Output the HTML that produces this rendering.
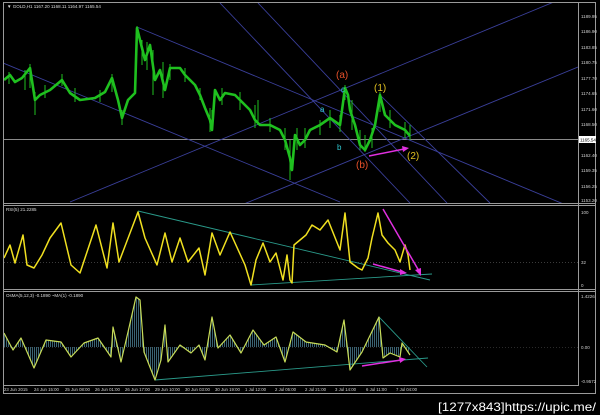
<!DOCTYPE html>
<html><head><meta charset="utf-8"><style>
html,body{margin:0;padding:0;background:#000;width:600px;height:415px;overflow:hidden}
svg{display:block}
text{font-family:"Liberation Sans",sans-serif}
</style></head><body>
<svg width="600" height="415" viewBox="0 0 600 415" xmlns="http://www.w3.org/2000/svg">
<defs>
<clipPath id="m"><rect x="4" y="3" width="574" height="200"/></clipPath>
<clipPath id="r"><rect x="4" y="206" width="574" height="82"/></clipPath>
<clipPath id="o"><rect x="4" y="291" width="574" height="93"/></clipPath>
<pattern id="hs" width="2" height="4" patternUnits="userSpaceOnUse"><rect width="1" height="4" fill="#3a6272"/></pattern>
</defs>
<rect width="600" height="415" fill="#000"/>
<g stroke="#9a9a9a" fill="none" stroke-width="1">
<rect x="3.5" y="2.5" width="592" height="391"/>
<line x1="3" y1="203.5" x2="596" y2="203.5"/>
<line x1="3" y1="205.5" x2="596" y2="205.5"/>
<line x1="3" y1="289.5" x2="596" y2="289.5"/>
<line x1="3" y1="291.5" x2="596" y2="291.5"/>
<line x1="578.5" y1="3" x2="578.5" y2="385"/>
<line x1="3" y1="385.5" x2="579" y2="385.5"/>
</g>
<g clip-path="url(#m)">
<line x1="4" y1="139.5" x2="578" y2="139.5" stroke="#8a8a8a"/>
<g stroke="#3a3f9a" stroke-width="0.9" fill="none">
<line x1="137" y1="27" x2="578" y2="210"/>
<line x1="3" y1="63" x2="340" y2="202"/>
<line x1="70" y1="202" x2="578" y2="-8"/>
<line x1="200" y1="222" x2="578" y2="67"/>
<line x1="220" y1="3" x2="410" y2="203"/>
<line x1="258" y1="3" x2="447" y2="203"/>
<line x1="380" y1="95" x2="490" y2="203"/>
</g>
<polyline fill="none" stroke="#1fc01f" stroke-width="2.6" stroke-linejoin="round" points="4,80 10,75 15,82 22,78 30,68 35,100 40,95 50,90 62,80 70,93 80,100 95,98 105,92 112,78 118,100 122,118 128,100 135,93 137,28 140,40 145,60 150,45 155,80 160,70 165,90 170,68 180,68 185,75 195,85 200,95 205,108 210,120 212,130 215,90 220,100 225,93 235,95 245,105 250,110 255,120 260,125 270,125 280,130 285,140 290,158 292,170 295,135 300,145 305,140 310,130 320,125 330,118 340,125 345,88 348,95 350,110 355,125 360,145 365,150 370,140 375,125 380,95 385,115 395,125 405,130 410,136"/>
<path fill="none" stroke="#1fc01f" stroke-width="1" d="M9,72V84M25,70V90M30,64V88M35,92V115M45,85V98M62,74V86M75,88V102M100,90V102M112,74V92M122,110V125M137,26V55M142,40V65M147,42V70M153,50V95M163,62V98M170,64V80M185,68V82M200,88V100M210,108V132M212,110V130M222,88V105M240,92V110M255,105V128M258,100V125M270,118V132M285,128V150M290,140V180M297,128V150M305,128V148M320,120V135M330,110V128M340,115V132M345,85V100M352,100V130M360,130V150M365,135V152M372,128V148M380,92V112M390,110V128M405,122V138M410,125V140"/>
</g>
<g font-size="4.5" fill="#cfcfcf">
<text x="581" y="18">1189.95</text><text x="581" y="33">1186.90</text><text x="581" y="49">1183.85</text>
<text x="581" y="64">1180.75</text><text x="581" y="80">1177.70</text><text x="581" y="95">1174.65</text>
<text x="581" y="111">1171.60</text><text x="581" y="126">1168.50</text>
<text x="581" y="157">1162.40</text><text x="581" y="172">1159.35</text><text x="581" y="188">1156.25</text><text x="581" y="202">1153.20</text>
<text x="581" y="214">100</text><text x="581" y="264">32</text><text x="581" y="287">0</text>
<text x="581" y="298">1.4226</text><text x="581" y="349">0.00</text><text x="581" y="383">-0.9572</text>
</g>
<rect x="579" y="136" width="17" height="7" fill="#fff"/>
<text x="580" y="141.5" font-size="4.5" fill="#000">1165.54</text>
<text x="7" y="8" font-size="4.5" fill="#ddd">▼ GOLD,H1  1167.20 1168.11 1164.97 1165.54</text>
<g font-size="10">
<text x="336" y="78" fill="#e8502a">(a)</text>
<text x="356" y="168" fill="#e8502a">(b)</text>
<text x="374" y="91" fill="#e0c020">(1)</text>
<text x="407" y="159" fill="#e0c020">(2)</text>
</g>
<g font-size="8" fill="#30c8d0">
<text x="341" y="92">c</text><text x="320" y="112">a</text><text x="337" y="150">b</text>
</g>
<line x1="369" y1="156" x2="404" y2="149" stroke="#e030e0" stroke-width="1.5"/>
<polygon points="409,148 402,146 403,152" fill="#e030e0"/>
<text x="6" y="211" font-size="4.5" fill="#ddd">RSI(5) 21.2285</text>
<g clip-path="url(#r)">
<line x1="4" y1="262.5" x2="578" y2="262.5" stroke="#777" stroke-dasharray="1,2" stroke-width="0.6"/>
<line x1="138" y1="211" x2="430" y2="280" stroke="#2a9a8a" stroke-width="0.9"/>
<line x1="251" y1="285" x2="432" y2="274" stroke="#2a9a8a" stroke-width="0.9"/>
<polyline fill="none" stroke="#f0e020" stroke-width="1.5" stroke-linejoin="round" points="4,258 10,245 15,263 23,235 27,265 34,268 42,255 50,238 61,223 71,265 80,273 96,225 107,268 113,223 119,262 138,212 145,238 157,265 165,233 172,262 180,238 188,262 199,248 205,275 212,233 220,255 230,232 245,265 251,285 256,260 263,243 270,262 276,253 283,280 287,255 290,280 292,283 294,245 300,240 306,235 312,225 320,230 328,220 334,235 340,250 345,213 350,262 358,268 362,270 368,258 372,238 378,213 382,235 388,243 395,250 400,262 405,245 408,255 410,270"/>
<line x1="383" y1="209" x2="419" y2="271" stroke="#e030e0" stroke-width="1.5"/>
<polygon points="421,276 415,270 421,268" fill="#e030e0"/>
<line x1="373" y1="264" x2="402" y2="272" stroke="#e030e0" stroke-width="1.5"/>
<polygon points="407,273 400,269 400,275" fill="#e030e0"/>
</g>
<text x="6" y="297" font-size="4.5" fill="#ddd">OsMA(5,12,3) -0.1890  ~MA(1) -0.1890</text>
<g clip-path="url(#o)">
<line x1="4" y1="347.5" x2="578" y2="347.5" stroke="#555" stroke-dasharray="1,2" stroke-width="0.6"/>
<polygon fill="url(#hs)" points="4,347 4,333 13,350 21,338 34,368 46,340 61,342 71,357 84,343 98,338 111,357 113,327 121,362 128,332 136,297 140,300 144,352 155,380 161,360 165,325 168,362 180,345 191,353 199,345 205,360 212,317 218,348 230,335 241,353 253,330 264,345 276,337 285,362 293,332 306,342 325,345 337,352 344,320 350,370 362,352 379,317 383,358 390,353 400,357 402,343 410,355 410,347"/>
<line x1="155" y1="380" x2="428" y2="358" stroke="#2a9a8a" stroke-width="0.9"/>
<line x1="379" y1="317" x2="427" y2="367" stroke="#2a9a8a" stroke-width="0.9"/>
<polyline fill="none" stroke="#c8dc58" stroke-width="1.2" stroke-linejoin="round" points="4,333 13,350 21,338 34,368 46,340 61,342 71,357 84,343 98,338 111,357 113,327 121,362 128,332 136,297 140,300 144,352 155,380 161,360 165,325 168,362 180,345 191,353 199,345 205,360 212,317 218,348 230,335 241,353 253,330 264,345 276,337 285,362 293,332 306,342 325,345 337,352 344,320 350,370 362,352 379,317 383,358 390,353 400,357 402,343 410,355"/>
<line x1="362" y1="366" x2="401" y2="360" stroke="#e030e0" stroke-width="1.5"/>
<polygon points="406,359 399,357 400,363" fill="#e030e0"/>
</g>
<g font-size="4.3" fill="#cfcfcf">
<text x="4" y="391">23 Jun 2015</text><text x="34" y="391">24 Jun 15:00</text><text x="65" y="391">25 Jun 08:00</text>
<text x="95" y="391">26 Jun 01:00</text><text x="125" y="391">26 Jun 17:00</text><text x="155" y="391">29 Jun 10:00</text>
<text x="185" y="391">30 Jun 03:00</text><text x="215" y="391">30 Jun 19:00</text><text x="245" y="391">1 Jul 12:00</text>
<text x="275" y="391">2 Jul 05:00</text><text x="305" y="391">2 Jul 21:00</text><text x="335" y="391">3 Jul 14:00</text>
<text x="366" y="391">6 Jul 11:00</text><text x="396" y="391">7 Jul 04:00</text>
</g>
<text x="438" y="411" font-size="12" fill="#fff" font-family="Liberation Mono,monospace" textLength="158" lengthAdjust="spacingAndGlyphs">[1277x843]https://upic.me/</text>
</svg>
</body></html>
